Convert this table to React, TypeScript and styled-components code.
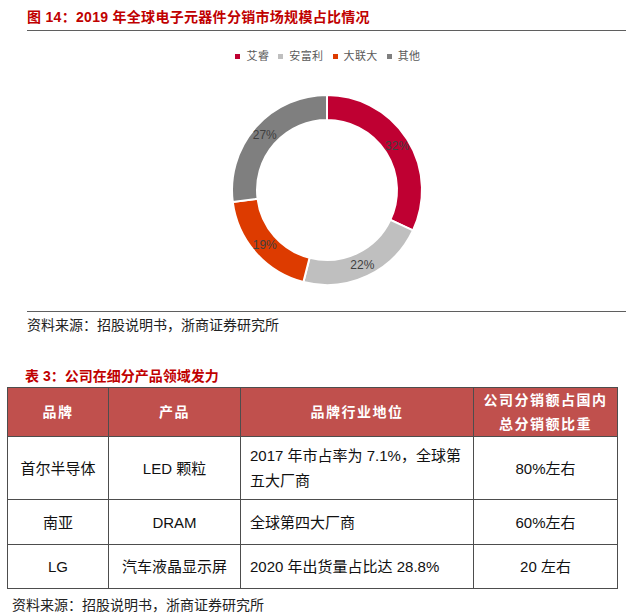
import React from 'react';
import styled, { createGlobalStyle } from 'styled-components';

const GlobalStyle = createGlobalStyle`
  html, body {
    margin: 0;
    padding: 0;
    background: #ffffff;
  }
  body {
    font-family: "Liberation Sans", "Noto Sans CJK SC", sans-serif;
    color: #111;
  }
`;

const colors = {
  titleRed: '#C00000',
  headerRed: '#C0504D',
  rule: '#5f5f5f',
  border: '#4d4d4d',
  label: '#404040',
  legendText: '#595959',
};

const Page = styled('div')`
  width: 640px;
  height: 615px;
  overflow: hidden;
`;

const Figure = styled('section')`
  margin-left: 27px;
  width: 599px;
`;

const FigTitle = styled('h2')`
  margin: 0;
  padding: 7px 0 3px;
  font-size: 14px;
  line-height: 20px;
  font-weight: 700;
  letter-spacing: 0.3px;
  color: ${colors.titleRed};
  border-bottom: 1.5px solid ${colors.rule};
`;

const ChartArea = styled('div')`
  display: flex;
  flex-direction: column;
  align-items: center;
  padding: 18px 0 21px;
  border-bottom: 1.5px solid ${colors.rule};
`;

const Legend = styled('ul')`
  display: flex;
  align-items: center;
  gap: 9px;
  margin: 0 0 0 3px;
  padding: 0;
  list-style: none;
  font-size: 11px;
  line-height: 14px;
  letter-spacing: 0.4px;
  color: ${colors.legendText};
`;

const LegendItem = styled('li')`
  display: flex;
  align-items: center;
  gap: 6px;
`;

const Swatch = styled('span')<{ $color: string }>`
  width: 5px;
  height: 5px;
  background: ${(p) => p.$color};
`;

const DonutSvg = styled('svg')`
  display: block;
  margin-top: 27px;
`;

const Source = styled('p')<{ $indent: number }>`
  margin: 0;
  padding-left: ${(p) => p.$indent}px;
  font-size: 14px;
  line-height: 18px;
  color: #222;
`;

const TableTitle = styled('h3')`
  margin: 33px 0 0;
  padding-left: 25px;
  font-size: 14px;
  line-height: 18px;
  font-weight: 700;
  color: ${colors.titleRed};
`;

const Table = styled('table')`
  margin: 2px 0 0 7px;
  width: 610px;
  border-collapse: collapse;
  table-layout: fixed;
  font-size: 15px;
  color: #111;
  td, th {
    border: 1px solid ${colors.border};
    padding: 0;
  }
`;

const HeadCell = styled('th')`
  background: ${colors.headerRed};
  color: #fff;
  font-size: 14px;
  line-height: 24px;
  font-weight: 700;
  letter-spacing: 1.5px;
  text-align: center;
`;

const Cell = styled('td')<{ $left?: boolean }>`
  text-align: ${(p) => (p.$left ? 'left' : 'center')};
  padding-left: ${(p) => (p.$left ? 9 : 0)}px !important;
  line-height: 25px;
  vertical-align: middle;
`;

const Row = styled('tr')<{ $h: number }>`
  height: ${(p) => p.$h}px;
`;

const segments = [
  { name: '艾睿', value: 32, color: '#BF0032' },
  { name: '安富利', value: 22, color: '#BFBFBF' },
  { name: '大联大', value: 19, color: '#DD3B00' },
  { name: '其他', value: 27, color: '#7F7F7F' },
];

function arc(cx: number, cy: number, r0: number, r1: number, a0: number, a1: number) {
  const pt = (r: number, a: number) => [cx + r * Math.sin(a), cy - r * Math.cos(a)];
  const large = a1 - a0 > Math.PI ? 1 : 0;
  const [x0, y0] = pt(r1, a0);
  const [x1, y1] = pt(r1, a1);
  const [x2, y2] = pt(r0, a1);
  const [x3, y3] = pt(r0, a0);
  return `M${x0} ${y0} A${r1} ${r1} 0 ${large} 1 ${x1} ${y1} L${x2} ${y2} A${r0} ${r0} 0 ${large} 0 ${x3} ${y3} Z`;
}

function Donut() {
  const total = segments.reduce((s, d) => s + d.value, 0);
  let acc = 0;
  return (
    <DonutSvg width="200" height="200" viewBox="0 0 200 200">
      {segments.map((d) => {
        const a0 = (acc / total) * Math.PI * 2;
        acc += d.value;
        const a1 = (acc / total) * Math.PI * 2;
        const mid = (a0 + a1) / 2;
        return (
          <g key={d.name}>
            <path d={arc(100, 100, 70, 95, a0, a1)} fill={d.color} stroke="#fff" strokeWidth="2" />
            <text
              x={100 + 83 * Math.sin(mid)}
              y={100 - 83 * Math.cos(mid) + 4}
              textAnchor="middle"
              fontSize="12"
              fontFamily="Liberation Sans, sans-serif"
              fill={colors.label}
            >
              {d.value}%
            </text>
          </g>
        );
      })}
    </DonutSvg>
  );
}

export default function App() {
  return (
    <Page>
      <GlobalStyle />
      <Figure>
        <FigTitle>图 14：2019 年全球电子元器件分销市场规模占比情况</FigTitle>
        <ChartArea>
          <Legend>
            {segments.map((d) => (
              <LegendItem key={d.name}>
                <Swatch $color={d.color} />
                {d.name}
              </LegendItem>
            ))}
          </Legend>
          <Donut />
        </ChartArea>
        <Source $indent={0} style={{ marginTop: 4 }}>资料来源：招股说明书，浙商证券研究所</Source>
      </Figure>

      <TableTitle>表 3：公司在细分产品领域发力</TableTitle>
      <Table>
        <colgroup>
          <col style={{ width: 101 }} />
          <col style={{ width: 132 }} />
          <col style={{ width: 233 }} />
          <col style={{ width: 144 }} />
        </colgroup>
        <thead>
          <Row $h={49}>
            <HeadCell>品牌</HeadCell>
            <HeadCell>产品</HeadCell>
            <HeadCell>品牌行业地位</HeadCell>
            <HeadCell>
              公司分销额占国内
              <br />
              总分销额比重
            </HeadCell>
          </Row>
        </thead>
        <tbody>
          <Row $h={63}>
            <Cell>首尔半导体</Cell>
            <Cell>LED 颗粒</Cell>
            <Cell $left>
              2017 年市占率为 7.1%，全球第
              <br />
              五大厂商
            </Cell>
            <Cell>80%左右</Cell>
          </Row>
          <Row $h={45}>
            <Cell>南亚</Cell>
            <Cell>DRAM</Cell>
            <Cell $left>全球第四大厂商</Cell>
            <Cell>60%左右</Cell>
          </Row>
          <Row $h={44}>
            <Cell>LG</Cell>
            <Cell>汽车液晶显示屏</Cell>
            <Cell $left>2020 年出货量占比达 28.8%</Cell>
            <Cell>20 左右</Cell>
          </Row>
        </tbody>
      </Table>
      <Source $indent={12} style={{ marginTop: 7 }}>资料来源：招股说明书，浙商证券研究所</Source>
    </Page>
  );
}
